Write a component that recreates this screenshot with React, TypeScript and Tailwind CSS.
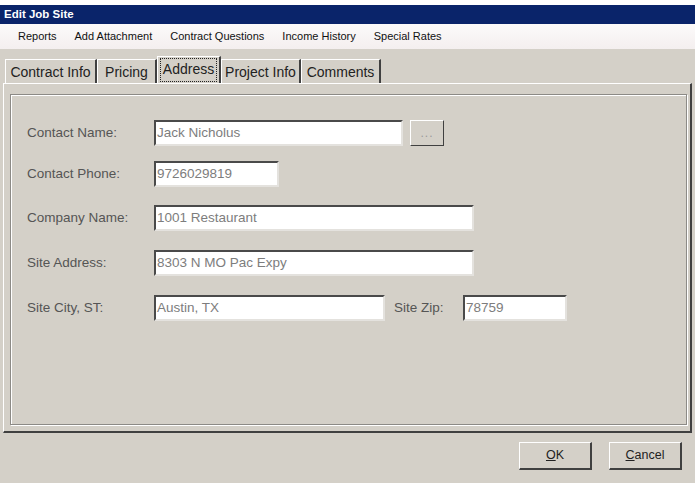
import React from "react";

const MENU = ["Reports", "Add Attachment", "Contract Questions", "Income History", "Special Rates"];

const TABS: { label: string; w: string; active?: boolean }[] = [
  { label: "Contract Info", w: "w-[92px]" },
  { label: "Pricing", w: "w-[60px]" },
  { label: "Address", w: "w-[64px]", active: true },
  { label: "Project Info", w: "w-[80px]" },
  { label: "Comments", w: "w-[80px]" },
];

export default function App() {
  return (
    <div
      className="w-[695px] h-[483px] bg-[#d4d0c8] flex flex-col overflow-hidden text-[#222]"
      style={{ fontFamily: '"Liberation Sans", Arial, sans-serif' }}
    >
      <div className="h-[5px] bg-white" />
      {/* title bar */}
      <div className="h-[19px] bg-[#0a246a] text-white font-bold text-[11.5px] leading-[19px] pl-[4px]">
        Edit Job Site
      </div>

      {/* menu */}
      <div className="h-[25px] bg-gradient-to-b from-[#fcfafa] to-[#f4efef] flex items-center pl-[18px] gap-[18px] text-[11px] text-[#111]">
        {MENU.map((m) => (
          <span key={m}>{m}</span>
        ))}
      </div>

      {/* tab strip */}
      <div className="h-[34px] flex items-end pl-[5px]">
        {TABS.map((t) => (
          <Tab key={t.label} {...t} />
        ))}
      </div>

      {/* tab panel */}
      <div className="ml-[3px] w-[689px] h-[350px] border-t border-l border-white border-r-2 border-b-2 border-r-[#404040] border-b-[#404040] pt-[10px] pl-[6px] pr-[3px]">
        <div className="h-[331px] border border-[#8c8a86] shadow-[1px_1px_0_#ffffff,inset_1px_1px_0_#ffffff] pt-[25px] pl-[16px] text-[13.5px]">
          <Row label="Contact Name:">
            <Input value="Jack Nicholus" w="w-[249px]" />
            <button className="ml-[7px] w-[34px] h-[26px] border border-t-white border-l-white border-b-[#404040] border-r-[#404040] bg-[#d4d0c8] text-[#9a9a9a] text-[12px] leading-[18px] tracking-[1px]">
              ...
            </button>
          </Row>
          <Row label="Contact Phone:" mt="mt-[15px]">
            <Input value="9726029819" w="w-[125px]" />
          </Row>
          <Row label="Company Name:" mt="mt-[18px]">
            <Input value="1001 Restaurant" w="w-[320px]" />
          </Row>
          <Row label="Site Address:" mt="mt-[19px]">
            <Input value="8303 N MO Pac Expy" w="w-[320px]" />
          </Row>
          <Row label="Site City, ST:" mt="mt-[19px]">
            <Input value="Austin, TX" w="w-[231px]" />
            <span className="ml-[9px] w-[69px] text-[#555]">Site Zip:</span>
            <Input value="78759" w="w-[104px]" />
          </Row>
        </div>
      </div>

      {/* footer buttons */}
      <div className="flex justify-end gap-[17px] pr-[13px] pt-[9px]">
        <DlgButton hot="O" rest="K" />
        <DlgButton hot="C" rest="ancel" />
      </div>
    </div>
  );
}

function Tab({ label, w, active }: { label: string; w: string; active?: boolean }) {
  if (active) {
    return (
      <div className={`${w} h-[27px] border-t border-l border-white border-r-2 border-r-[#404040] flex items-start justify-center pt-[1px] px-[2px] relative z-10`}>
        <span className="border border-dotted border-[#222] w-full h-[24px] text-center text-[14px] leading-[20px]">
          {label}
        </span>
      </div>
    );
  }
  return (
    <div className={`${w} h-[24px] border-t border-l border-white border-r-2 border-r-[#404040] text-center text-[14px] leading-[25px]`}>
      {label}
    </div>
  );
}

function Row({ label, mt = "", children }: { label: string; mt?: string; children: React.ReactNode }) {
  return (
    <div className={`flex items-center ${mt}`}>
      <span className="w-[127px] text-[#555]">{label}</span>
      {children}
    </div>
  );
}

function Input({ value, w }: { value: string; w: string }) {
  return (
    <div className={`${w} h-[26px] bg-white border-2 border-t-[#4a4a4a] border-l-[#4a4a4a] border-b-[#e4e2de] border-r-[#e4e2de] pl-[1px] leading-[21px] text-[#7d7d7d] text-[13.5px]`}>
      {value}
    </div>
  );
}

function DlgButton({ hot, rest }: { hot: string; rest: string }) {
  return (
    <button className="w-[73px] h-[28px] bg-[#d4d0c8] border border-t-white border-l-white border-b-2 border-r-2 border-b-[#404040] border-r-[#404040] text-[12.5px] text-[#222]">
      <span className="underline">{hot}</span>
      {rest}
    </button>
  );
}
